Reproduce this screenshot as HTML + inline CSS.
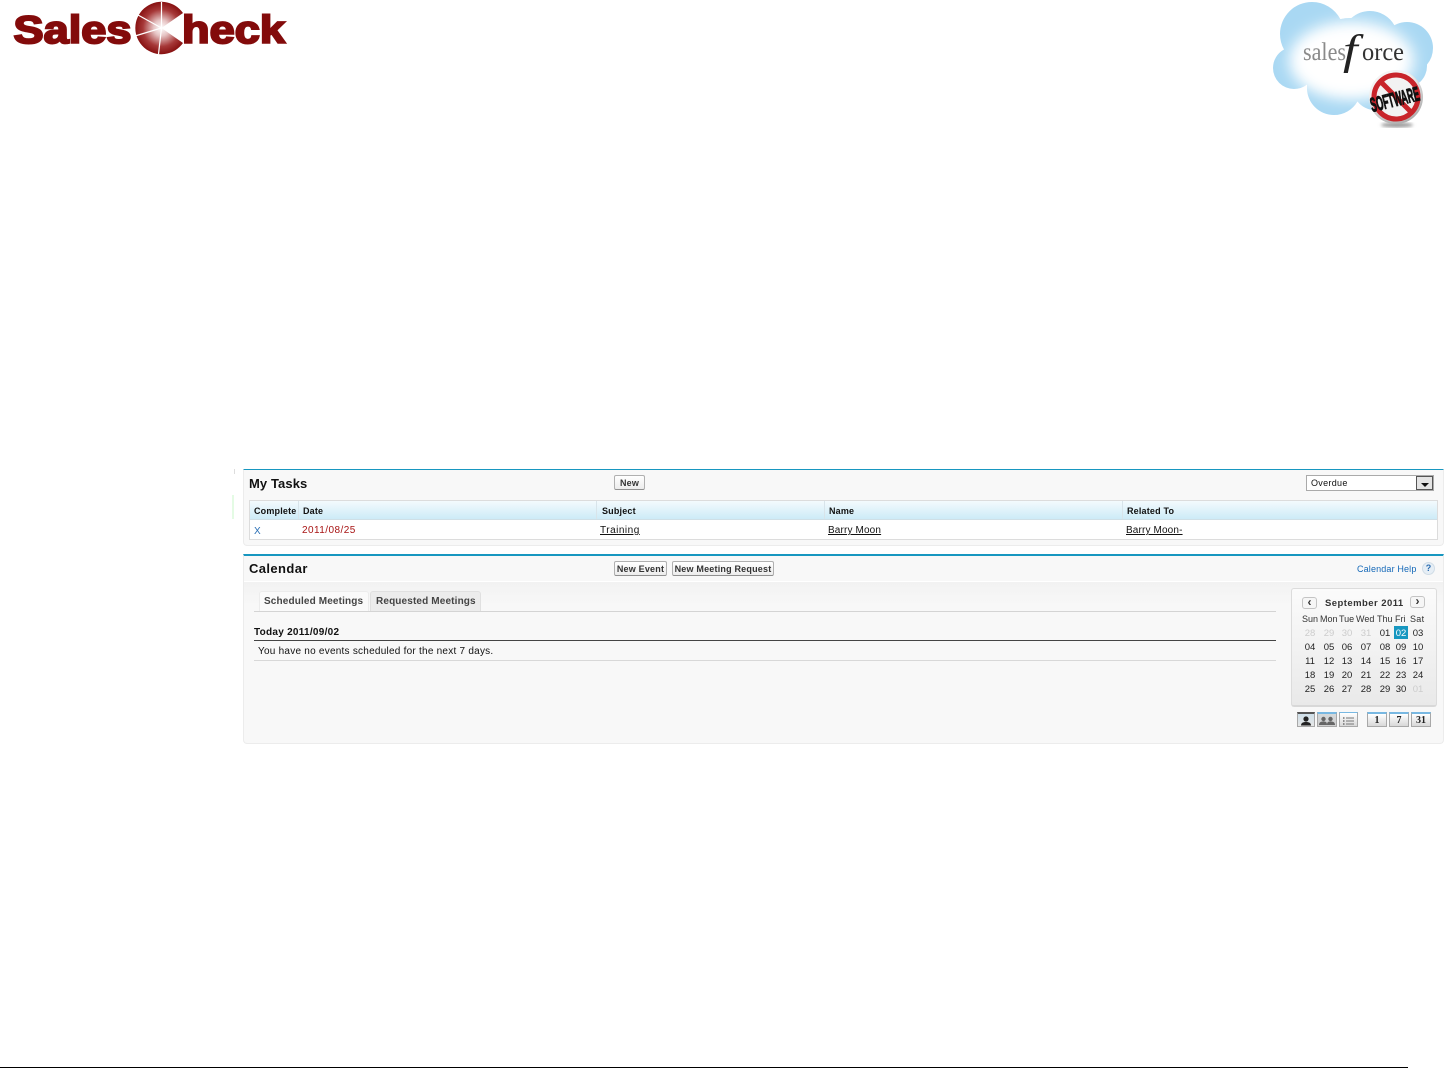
<!DOCTYPE html>
<html><head><meta charset="utf-8"><title>SalesCheck</title>
<style>
html,body{margin:0;padding:0;background:#fff;width:1452px;height:1068px;overflow:hidden}
body{position:relative;font-family:"Liberation Sans",Arial,sans-serif;color:#111;font-size:10px}
.a,.t{position:absolute}
.t{white-space:nowrap;line-height:12px}
.b{font-weight:bold}
.u{text-decoration:underline}
.h{font-size:9px;font-weight:bold;letter-spacing:.18px}
.btn{position:absolute;box-sizing:border-box;height:15px;border:1px solid #b0b0b0;border-bottom-color:#909090;border-radius:2px;background:linear-gradient(#fff,#ececec);font-weight:bold;font-size:9px;letter-spacing:.2px;line-height:14px;text-align:center;color:#333;white-space:nowrap}
.c{position:absolute;width:18px;text-align:center;font-size:9.5px;line-height:12px;color:#222}
.g{color:#ccc}
.d{font-size:9px;color:#333}
.ic{position:absolute;box-sizing:border-box;height:15px;top:712px;border:1px solid #a8a8a8;border-top:2px solid #78b8e2;background:linear-gradient(#fff,#d8d8d8);text-align:center;font:bold 10px/14px "Liberation Serif",serif;color:#222}
.nav{position:absolute;box-sizing:border-box;width:15px;height:12px;border:1px solid #c4c4c4;border-radius:3px;background:#f6f6f6;font:bold 12px/9px "Liberation Sans";text-align:center;color:#333}
</style></head><body>

<!-- SalesCheck logo -->
<svg class="a" style="left:0;top:0" width="300" height="60">
<defs><radialGradient id="r" cx="161.5" cy="28" r="26.5" gradientUnits="userSpaceOnUse">
<stop offset="0" stop-color="#fff"/><stop offset=".3" stop-color="#e6c4c4"/><stop offset=".7" stop-color="#a63838"/><stop offset="1" stop-color="#860f0f"/></radialGradient></defs>
<text x="13.5" y="43" font-family="Liberation Sans" font-weight="bold" font-size="38.5" fill="#830b0b" stroke="#830b0b" stroke-width="2" textLength="118" lengthAdjust="spacingAndGlyphs">Sales</text>
<path d="M161.5 28 L183 13 A26.2 26.2 0 1 0 183 43 Z" fill="url(#r)"/>
<path d="M161.5 28V2M161.5 28L138 15M161.5 28L158.5 54M161.5 28L135 36" stroke="#fff" stroke-width="1.2" fill="none"/>
<text x="182" y="43" font-family="Liberation Sans" font-weight="bold" font-size="38.5" fill="#830b0b" stroke="#830b0b" stroke-width="2" textLength="103" lengthAdjust="spacingAndGlyphs">heck</text>
</svg>

<!-- Salesforce cloud -->
<svg class="a" style="left:1260px;top:0" width="192" height="135">
<defs>
<filter id="bl" x="-30%" y="-30%" width="160%" height="160%"><feGaussianBlur stdDeviation="8"/></filter>
<clipPath id="cl"><circle cx="52" cy="34" r="32"/><circle cx="110" cy="39" r="28"/><circle cx="147" cy="48" r="26"/><circle cx="34" cy="68" r="21"/><circle cx="74" cy="88" r="27"/><circle cx="115" cy="88" r="22"/><circle cx="90" cy="60" r="42"/><circle cx="145" cy="66" r="22"/></clipPath>
<radialGradient id="s" cx=".42" cy=".35" r=".65"><stop offset="0" stop-color="#fff"/><stop offset=".65" stop-color="#f0f0f0"/><stop offset="1" stop-color="#b0b0b0"/></radialGradient>
<filter id="sh"><feGaussianBlur stdDeviation="1.5"/></filter>
</defs>
<g clip-path="url(#cl)"><rect width="192" height="135" fill="#a9d8f3"/>
<ellipse cx="92" cy="60" rx="62" ry="38" fill="#fff" filter="url(#bl)"/><ellipse cx="90" cy="62" rx="52" ry="30" fill="#fff" filter="url(#bl)"/></g>
<text x="43" y="60" font-family="Liberation Serif" font-size="25" fill="#8a8a8a" textLength="43" lengthAdjust="spacingAndGlyphs">sales</text>
<text transform="translate(83 64) scale(1.25 1)" font-family="Liberation Serif" font-style="italic" font-size="42" fill="#222">f</text>
<text x="102" y="60" font-family="Liberation Serif" font-size="25" fill="#333" textLength="42" lengthAdjust="spacingAndGlyphs">orce</text>
<ellipse cx="137" cy="125" rx="16" ry="2.5" fill="#999" filter="url(#sh)"/>
<circle cx="136" cy="97" r="27" fill="url(#s)"/>
<circle cx="136" cy="97" r="22" fill="#f2f2f2" stroke="#c8242a" stroke-width="5"/>
<path d="M121 82L151 112" stroke="#c8242a" stroke-width="5"/>
<text transform="translate(136.5 106) rotate(-14)" text-anchor="middle" font-family="Liberation Sans" font-weight="bold" font-size="20" fill="#111" stroke="#111" stroke-width="1" textLength="50" lengthAdjust="spacingAndGlyphs">SOFTWARE</text>
</svg>

<!-- left marks -->
<div class="a" style="left:232px;top:495px;width:2px;height:24px;background:#e4fbe4"></div>
<div class="a" style="left:234px;top:469px;width:1px;height:5px;background:#ddd"></div>

<!-- My Tasks panel -->
<div class="a" style="left:243px;top:469px;width:1201px;height:77px;box-sizing:border-box;background:#f8f8f8;border:1px solid #ececec;border-top:1px solid #1797c0;border-radius:0 0 4px 4px"></div>
<div class="t b" style="left:249px;top:476px;font-size:13px;line-height:15px;letter-spacing:.1px">My Tasks</div>
<div class="btn" style="left:614px;top:475px;width:31px">New</div>
<div class="a" style="left:1306px;top:475px;width:128px;height:16px;box-sizing:border-box;background:#fff;border:1px solid #aaa"></div>
<div class="t" style="left:1311px;top:477px;font-size:9px;letter-spacing:.3px">Overdue</div>
<div class="a" style="left:1416px;top:476px;width:17px;height:14px;box-sizing:border-box;border:1px solid #555;background:#e4e4e4"></div>
<div class="a" style="left:1421px;top:483px;width:0;height:0;border:4px solid transparent;border-top:4px solid #111;border-bottom:0"></div>

<div class="a" style="left:249px;top:500px;width:1189px;height:40px;box-sizing:border-box;border:1px solid #dcdcdc;background:#fff"></div>
<div class="a" style="left:250px;top:501px;width:1187px;height:18px;background:linear-gradient(#f3fafd,#cdebf7);border-bottom:1px solid #cfdfe6"></div>
<div class="a" style="left:298px;top:501px;width:1px;height:18px;background:#d8e4ea"></div>
<div class="a" style="left:596px;top:501px;width:1px;height:18px;background:#d8e4ea"></div>
<div class="a" style="left:824px;top:501px;width:1px;height:18px;background:#d8e4ea"></div>
<div class="a" style="left:1122px;top:501px;width:1px;height:18px;background:#d8e4ea"></div>
<div class="t h" style="left:254px;top:505px">Complete</div>
<div class="t h" style="left:303px;top:505px">Date</div>
<div class="t h" style="left:602px;top:505px">Subject</div>
<div class="t h" style="left:829px;top:505px">Name</div>
<div class="t h" style="left:1127px;top:505px">Related To</div>
<div class="t" style="left:254px;top:526px;font-size:10px;color:#2a6fb5">X</div>
<div class="t" style="left:302px;top:525px;color:#a81414;letter-spacing:.45px">2011/08/25</div>
<div class="t u" style="left:600px;top:525px;letter-spacing:.5px">Training</div>
<div class="t u" style="left:828px;top:525px;letter-spacing:.14px">Barry Moon</div>
<div class="t u" style="left:1126px;top:525px;letter-spacing:.14px">Barry Moon-</div>

<!-- Calendar panel -->
<div class="a" style="left:243px;top:554px;width:1201px;height:190px;box-sizing:border-box;background:#f8f8f8;border:1px solid #ececec;border-top:2px solid #1797c0;border-radius:0 0 4px 4px"></div>
<div class="a" style="left:244px;top:581px;width:1199px;height:1px;background:#fff"></div>
<div class="a" style="left:244px;top:582px;width:1199px;height:24px;background:linear-gradient(#f2f2f2,#f8f8f8)"></div>
<div class="t b" style="left:249px;top:561px;font-size:13px;line-height:15px;letter-spacing:.4px">Calendar</div>
<div class="btn" style="left:614px;top:561px;width:53px">New Event</div>
<div class="btn" style="left:672px;top:561px;width:102px">New Meeting Request</div>
<div class="t" style="left:1357px;top:563px;font-size:9px;letter-spacing:.15px;color:#1468b8">Calendar Help</div>
<div class="a" style="left:1422px;top:562px;width:13px;height:13px;box-sizing:border-box;border-radius:50%;background:#e6eef5;border:1px solid #d0dce6;color:#2b6cb0;font:bold 9px/11px 'Liberation Sans';text-align:center">?</div>

<div class="a" style="left:259px;top:591px;width:110px;height:21px;box-sizing:border-box;background:#fafafa;border:1px solid #ececec;border-bottom:0;border-radius:3px 3px 0 0"></div>
<div class="a" style="left:370px;top:591px;width:111px;height:20px;box-sizing:border-box;background:#ececec;border:1px solid #e0e0e0;border-bottom:0;border-radius:3px 3px 0 0"></div>
<div class="a" style="left:254px;top:611px;width:1022px;height:1px;background:#d4d4d4"></div>
<div class="t b" style="left:264px;top:596px;color:#444;letter-spacing:.14px;font-size:10px">Scheduled Meetings</div>
<div class="t b" style="left:376px;top:596px;color:#444;letter-spacing:.14px;font-size:10px">Requested Meetings</div>
<div class="t b" style="left:254px;top:627px;letter-spacing:.27px">Today 2011/09/02</div>
<div class="a" style="left:254px;top:640px;width:1022px;height:1px;background:#444"></div>
<div class="t" style="left:258px;top:646px;letter-spacing:.24px">You have no events scheduled for the next 7 days.</div>
<div class="a" style="left:254px;top:660px;width:1022px;height:1px;background:#d8d8d8"></div>

<!-- mini calendar -->
<div class="a" style="left:1291px;top:588px;width:146px;height:119px;box-sizing:border-box;border:1px solid #dcdcdc;border-bottom:2px solid #d8d8d8;border-radius:3px;background:linear-gradient(#fbfbfb,#e9e9e9)"></div>
<div class="nav" style="left:1302px;top:597px">‹</div>
<div class="nav" style="left:1410px;top:596px">›</div>
<div class="t b" style="left:1325px;top:598px;font-size:9.5px;color:#333;letter-spacing:.45px">September 2011</div>
<div class="t d" style="left:1302px;top:613px">Sun</div>
<div class="t d" style="left:1320px;top:613px">Mon</div>
<div class="t d" style="left:1339px;top:613px">Tue</div>
<div class="t d" style="left:1356px;top:613px">Wed</div>
<div class="t d" style="left:1377px;top:613px">Thu</div>
<div class="t d" style="left:1395px;top:613px">Fri</div>
<div class="t d" style="left:1410px;top:613px;letter-spacing:.3px">Sat</div>
<div class="a" style="left:1394px;top:626px;width:14px;height:13px;background:#1797c0"></div>

<div class="c g" style="left:1301px;top:628px">28</div><div class="c g" style="left:1320px;top:628px">29</div><div class="c g" style="left:1338px;top:628px">30</div><div class="c g" style="left:1357px;top:628px">31</div><div class="c" style="left:1376px;top:628px">01</div><div class="c" style="left:1392px;top:628px;color:#fff">02</div><div class="c" style="left:1409px;top:628px">03</div>
<div class="c" style="left:1301px;top:642px">04</div><div class="c" style="left:1320px;top:642px">05</div><div class="c" style="left:1338px;top:642px">06</div><div class="c" style="left:1357px;top:642px">07</div><div class="c" style="left:1376px;top:642px">08</div><div class="c" style="left:1392px;top:642px">09</div><div class="c" style="left:1409px;top:642px">10</div>
<div class="c" style="left:1301px;top:656px">11</div><div class="c" style="left:1320px;top:656px">12</div><div class="c" style="left:1338px;top:656px">13</div><div class="c" style="left:1357px;top:656px">14</div><div class="c" style="left:1376px;top:656px">15</div><div class="c" style="left:1392px;top:656px">16</div><div class="c" style="left:1409px;top:656px">17</div>
<div class="c" style="left:1301px;top:670px">18</div><div class="c" style="left:1320px;top:670px">19</div><div class="c" style="left:1338px;top:670px">20</div><div class="c" style="left:1357px;top:670px">21</div><div class="c" style="left:1376px;top:670px">22</div><div class="c" style="left:1392px;top:670px">23</div><div class="c" style="left:1409px;top:670px">24</div>
<div class="c" style="left:1301px;top:684px">25</div><div class="c" style="left:1320px;top:684px">26</div><div class="c" style="left:1338px;top:684px">27</div><div class="c" style="left:1357px;top:684px">28</div><div class="c" style="left:1376px;top:684px">29</div><div class="c" style="left:1392px;top:684px">30</div><div class="c g" style="left:1409px;top:684px">01</div>

<!-- view icons -->
<div class="ic" style="left:1297px;width:18px;border-top-color:#555;background:linear-gradient(#cfe0ea,#e6e6e6)"></div>
<svg class="a" style="left:1297px;top:713px" width="18" height="14"><circle cx="9" cy="6" r="2.6" fill="#222"/><path d="M4 12.5c0-3 2.5-3.5 5-3.5s5 .5 5 3.5z" fill="#222"/></svg>
<div class="ic" style="left:1317px;width:20px;background:linear-gradient(#d4d8da,#cfcfcf)"></div>
<svg class="a" style="left:1317px;top:713px" width="20" height="14"><circle cx="6.5" cy="6" r="2.2" fill="#666"/><circle cx="13.5" cy="6" r="2.2" fill="#666"/><path d="M2 12c0-3 2-3.5 4.5-3.5S10 9 10 12zM10 12c0-3 1-3.5 3.5-3.5S18 9 18 12z" fill="#666"/></svg>
<div class="ic" style="left:1339px;width:19px;border-top-width:1px"></div>
<svg class="a" style="left:1339px;top:713px" width="19" height="14"><path d="M4 5h1.5M4 8h1.5M4 11h1.5" stroke="#333" fill="none"/><path d="M7 5h8M7 8h8M7 11h8" stroke="#777" fill="none"/></svg>
<div class="ic" style="left:1367px;width:20px">1</div>
<div class="ic" style="left:1389px;width:20px">7</div>
<div class="ic" style="left:1411px;width:20px">31</div>

<!-- bottom rule -->
<div class="a" style="left:0;top:1067px;width:1408px;height:1px;background:#000"></div>
</body></html>
